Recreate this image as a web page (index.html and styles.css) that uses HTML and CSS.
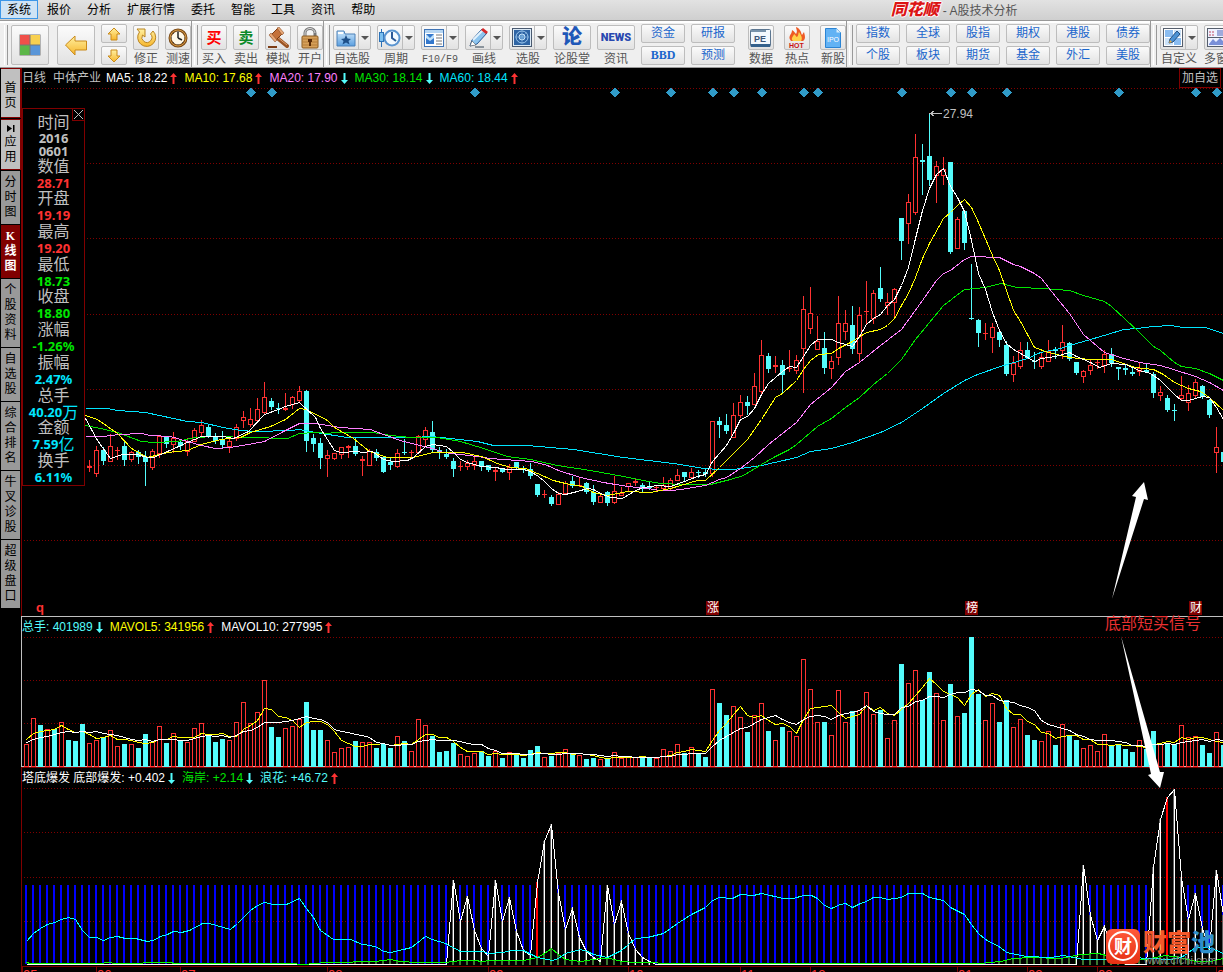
FILE: index.html
```html
<!DOCTYPE html>
<html lang="zh-CN">
<head>
    <meta charset="UTF-8">
    <meta name="viewport" content="width=device-width, initial-scale=1.0">
    <title>同花顺 - A股技术分析</title>
    <link rel="stylesheet" href="styles.css">
</head>
<body>
    <svg class="defs" aria-hidden="true">
        <defs>
            <linearGradient id="gold" x1="0" y1="0" x2="0" y2="1">
                <stop offset="0" stop-color="#fff0a0"/>
                <stop offset="1" stop-color="#f7b62c"/>
            </linearGradient>
            <linearGradient id="sky" x1="0" y1="0" x2="0" y2="1">
                <stop offset="0" stop-color="#cfe8fb"/>
                <stop offset="1" stop-color="#5a9fe0"/>
            </linearGradient>
            <linearGradient id="logo-red" x1="0" y1="0" x2="0" y2="1">
                <stop offset="0" stop-color="#ff5a3c"/>
                <stop offset="1" stop-color="#e63012"/>
            </linearGradient>
            <symbol id="up" viewBox="0 0 7 11">
                <path d="M3.5 0L7 4H4.5V11H2.5V4H0Z" fill="#ff3232"/>
            </symbol>
            <symbol id="down" viewBox="0 0 7 11">
                <path d="M3.5 11L7 7H4.5V0H2.5V7H0Z" fill="#54fcfc"/>
            </symbol>
        </defs>
    </svg>

    <header class="menubar">
        <nav class="menu">
            <button class="active">系统</button>
            <button>报价</button>
            <button>分析</button>
            <button>扩展行情</button>
            <button>委托</button>
            <button>智能</button>
            <button>工具</button>
            <button>资讯</button>
            <button>帮助</button>
        </nav>
        <div class="title"><strong>同花顺</strong><span>- A股技术分析</span></div>
    </header>

    <div class="toolbar">
        <div class="group">
            <button class="face big wide-gap" aria-label="面板">
                <svg width="22" height="22" viewBox="0 0 22 22"><rect x="0.5" y="0.5" width="21" height="21" fill="#777"/><path d="M1 1h10v10H1z" fill="#f0504a"/><path d="M11 1h10v10H11z" fill="#f8d050"/><path d="M1 11h10v10H1z" fill="#5cb648"/><path d="M11 11h10v10H11z" fill="#5a96d8"/><path d="M11 1v20M1 11h20" stroke="#777"/></svg>
            </button>
            <button class="face big" aria-label="后退">
                <svg width="24" height="22" viewBox="0 0 24 22"><path d="M1.500 11L11 2V7H22.500V16H11V21Z" fill="url(#gold)" stroke="#c98a1a"/></svg>
            </button>
            <div class="pair narrow">
                <button class="face small" aria-label="上一个"><svg width="14" height="14" viewBox="0 0 14 14"><path d="M7 1L13 7H10V13H4V7H1Z" fill="url(#gold)" stroke="#c98a1a"/></svg></button>
                <button class="face small" aria-label="下一个"><svg width="14" height="14" viewBox="0 0 14 14"><path d="M7 13L1 7H4V1H10V7H13Z" fill="url(#gold)" stroke="#c98a1a"/></svg></button>
            </div>
            <button class="tool"><span class="face"><svg width="22" height="22" viewBox="0 0 22 22"><path d="M2 2h8v8L7.500 8A5 5 0 1 0 15.500 7L18 4A9 9 0 1 1 4.500 5Z" fill="url(#gold)" stroke="#b98420"/></svg></span>修正</button>
            <button class="tool"><span class="face"><svg width="20" height="20" viewBox="0 0 20 20"><circle cx="10" cy="10" r="8" fill="#fff8e6" stroke="#7a4a18" stroke-width="3"/><circle cx="10" cy="10" r="8" fill="none" stroke="#d79a40"/><path d="M10 10V4M10 10L14 12" stroke="#222" stroke-width="1.500"/><path d="M10 3v1M10 16v1M3 10h1M16 10h1M5 5l1 1M14 14l1 1M5 15l1-1" stroke="#555"/></svg></span>测速</button>
        </div>

        <div class="group">
            <button class="tool"><span class="face buy">买</span>买入</button>
            <button class="tool"><span class="face sell">卖</span>卖出</button>
            <button class="tool"><span class="face"><svg width="22" height="22" viewBox="0 0 22 22"><path d="M9 10L20 19" stroke="#9a5424" stroke-width="4" stroke-linecap="round"/><path d="M10 10L20 18" stroke="#e0a070" stroke-width="1"/><path d="M3 9L11 1L16 6L8 14Z" fill="#c4713a" stroke="#7c3c14"/><path d="M2 8L4 6L10 13L8 15ZM10 1L12 0L17 6L15 8Z" fill="#e7a878" stroke="#7c3c14" stroke-width="0.500"/><path d="M1 20h9" stroke="#7c3c14" stroke-width="2"/></svg></span>模拟</button>
            <button class="tool"><span class="face"><svg width="20" height="22" viewBox="0 0 20 22"><path d="M5 10V6a5 4.500 0 0 1 10 0V10" fill="none" stroke="#777" stroke-width="3"/><path d="M5 9V6a5 4.500 0 0 1 10 0" fill="none" stroke="#ddd"/><rect x="2" y="9" width="16" height="12" rx="1" fill="#d6a05a" stroke="#8a5a20"/><path d="M3 12h14M3 15h14M3 18h14" stroke="#b57c38"/><path d="M8 12h4v3h-1v4H9v-4H8z" fill="#5a2c08"/></svg></span>开户</button>
        </div>

        <div class="group">
            <button class="tool"><span class="face split"><span class="main"><svg width="20" height="20" viewBox="0 0 20 20"><path d="M1 3h7l1 3h10v12H1z" fill="url(#sky)" stroke="#4a80b8"/><path d="M2 4h5v2H2z" fill="#fff"/><path d="M10 7l1.500 3.500L15 11l-2.500 2 1 3.500L10 14.500l-3.500 2 1-3.500L5 11l3.500-.5z" fill="#1e4f88"/></svg></span><i class="caret"></i></span>自选股</button>
            <button class="tool"><span class="face split"><span class="main"><svg width="22" height="20" viewBox="0 0 22 20"><path d="M2.500 1v18" stroke="#2b72b8"/><rect x="0.500" y="4.500" width="4" height="9" fill="#7cc0f0" stroke="#2b72b8"/><circle cx="13" cy="10" r="7.500" fill="#f4faff" stroke="#5a94d0" stroke-width="2"/><path d="M13 4v6l4 3" fill="none" stroke="#2c5a98" stroke-width="2"/></svg></span><i class="caret"></i></span>周期</button>
            <button class="tool"><span class="face split"><span class="main"><svg width="20" height="18" viewBox="0 0 20 18"><rect x="0.500" y="0.500" width="19" height="17" fill="#fff" stroke="#3f73b4"/><path d="M1 1h18v3H1z" fill="#b5d5f2"/><rect x="2" y="5" width="8" height="10" fill="#3478cc"/><path d="M2 5l4 4 4-4v4l-4 3-4-3z" fill="#bde0fa"/><path d="M12 6h6M12 9h6M12 12h6M12 15h6" stroke="#777"/></svg></span><i class="caret"></i></span><small>F10/F9</small></button>
            <button class="tool"><span class="face split"><span class="main"><svg width="20" height="20" viewBox="0 0 20 20"><path d="M2 18l2-6L14 1l5 4L9 16z" fill="#8cc4ee" stroke="#2a5c98"/><path d="M5 12L15 2" stroke="#e2f2fd" stroke-width="2"/><path d="M13 2l2-2 5 4-2 2z" fill="#d82828"/><path d="M2 18l2-5 4 4z" fill="#fff" stroke="#444" stroke-width="0.500"/><path d="M7 19h9" stroke="#345"/></svg></span><i class="caret"></i></span>画线</button>
            <button class="tool"><span class="face split"><span class="main"><svg width="20" height="19" viewBox="0 0 20 19"><rect x="0.500" y="0.500" width="19" height="18" fill="#dceaf6" stroke="#4a5a70"/><rect x="2" y="2" width="16" height="15" fill="#2e64a4"/><circle cx="10" cy="9" r="6" fill="none" stroke="#9dc8ee"/><circle cx="10" cy="9" r="3" fill="#5a94cc" stroke="#c8e4fa"/><path d="M10 2v14M3 9h14M10 9l5-5" stroke="#8cb8e0" stroke-width="0.500"/></svg></span><i class="caret"></i></span>选股</button>
            <button class="tool"><span class="face medium forum">论</span>论股堂</button>
            <button class="tool"><span class="face medium news">NEWS</span>资讯</button>
            <div class="pair"><button class="face small">资金</button><button class="face small bbd">BBD</button></div>
            <div class="pair"><button class="face small">研报</button><button class="face small">预测</button></div>
            <div class="group-inner">
                <button class="tool"><span class="face"><svg width="22" height="20" viewBox="0 0 22 20"><rect x="0.500" y="1.500" width="20" height="17" rx="1" fill="#f3f8fd" stroke="#5c7690"/><path d="M1 16h19v3H1z" fill="#34618c"/><path d="M1 2h15v2H1z" fill="#7892aa"/><text x="4" y="14" font-size="9" font-weight="bold" fill="#3c5678">PE</text></svg></span>数据</button>
                <button class="tool"><span class="face"><svg width="20" height="22" viewBox="0 0 20 22"><path d="M4 14C0 9 5 8 5 3C8 5 8 6 9 7C11 4 9 2 9 0C14 2 14 6 15 8L17 5C18 9 19 12 16 14Z" fill="#ee5a24"/><path d="M6 14C3 11 7 9 7 7C9 8 9 10 10 10C12 8 11 6 12 5C14 8 16 11 14 14Z" fill="#ffd04a"/><text x="2" y="21" font-size="7" font-weight="bold" fill="#c81414">HOT</text></svg></span>热点</button>
                <button class="tool"><span class="face"><svg width="16" height="20" viewBox="0 0 16 20"><path d="M0.500 0.500h11l4 4v15H0.500z" fill="#62b2f4" stroke="#2b84d4"/><path d="M11.500 0.500v4h4z" fill="#d8eefe"/><text x="2" y="14" font-size="7" fill="#fff">IPO</text></svg></span>新股</button>
            </div>
        </div>

        <div class="group">
            <div class="pair"><button class="face small">指数</button><button class="face small">个股</button></div>
            <div class="pair"><button class="face small">全球</button><button class="face small">板块</button></div>
            <div class="pair"><button class="face small">股指</button><button class="face small">期货</button></div>
            <div class="pair"><button class="face small">期权</button><button class="face small">基金</button></div>
            <div class="pair"><button class="face small">港股</button><button class="face small">外汇</button></div>
            <div class="pair"><button class="face small">债券</button><button class="face small">美股</button></div>
        </div>

        <div class="group">
            <button class="tool"><span class="face split"><span class="main"><svg width="20" height="19" viewBox="0 0 20 19"><rect x="0.500" y="0.500" width="19" height="18" fill="#fff" stroke="#555e6c"/><path d="M2 2h8v7H2zM11 10h7v7h-7z" fill="#8abcf0"/><path d="M11 2h7v7h-7zM2 10h8v7H2z" fill="#cbe2f8"/><path d="M6 15l1-4 7-8 3 3-7 8z" fill="#4c92d4" stroke="#234e80"/><path d="M6 15l1-3 2 2z" fill="#f0b040"/></svg></span><i class="caret"></i></span>自定义</button>
            <button class="tool start"><span class="face split"><span class="main"><svg width="20" height="19" viewBox="0 0 20 19"><rect x="0.500" y="0.500" width="19" height="18" fill="#eef2ff" stroke="#555e6c"/><path d="M2 4h6M2 7h6" stroke="#c04860" stroke-dasharray="2 1"/><path d="M10 3h8M10 5h8M10 7h8" stroke="#4d62b8"/><path d="M2 16l4-5 3 3 4-4 5 5v2H2z" fill="#7a90d8"/><path d="M1 9.500h18" stroke="#555e6c"/></svg></span><i class="caret"></i></span>多窗</button>
        </div>
    </div>

    <main class="workspace">
        <aside class="tabs">
            <button class="light">首页</button>
            <button class="light"><svg width="8" height="7" viewBox="0 0 8 7"><path d="M0 0L5 3.500L0 7ZM6 0h1.500v7H6z"/></svg>应用</button>
            <button>分时图</button>
            <button class="active">K线图</button>
            <button>个股资料</button>
            <button>自选股</button>
            <button>综合排名</button>
            <button>牛叉诊股</button>
            <button>超级盘口</button>
        </aside>

        <div class="charts">
            <section class="panel price">
                <div class="legend">
                    <span class="grey name">日线</span>
                    <span class="grey stock">中体产业</span>
                    <span class="white">MA5: 18.22<svg><use href="#up"/></svg></span>
                    <span class="yellow">MA10: 17.68<svg><use href="#up"/></svg></span>
                    <span class="pink">MA20: 17.90<svg><use href="#down"/></svg></span>
                    <span class="green">MA30: 18.14<svg><use href="#down"/></svg></span>
                    <span class="cyan">MA60: 18.44<svg><use href="#up"/></svg></span>
                    <button class="add">加自选</button>
                </div>
                <svg id="price-chart" class="plot" viewBox="22 88 1201 528" preserveAspectRatio="xMinYMin"></svg>
            </section>

            <section class="panel volume">
                <div class="legend">
                    <span class="aqua">总手: 401989<svg><use href="#down"/></svg></span>
                    <span class="yellow">MAVOL5: 341956<svg><use href="#up"/></svg></span>
                    <span class="white">MAVOL10: 277995<svg><use href="#up"/></svg></span>
                </div>
                <svg id="volume-chart" class="plot" viewBox="22 637 1201 130" preserveAspectRatio="xMinYMin"></svg>
            </section>

            <section class="panel tower">
                <div class="legend">
                    <span class="white">塔底爆发 底部爆发: +0.402<svg><use href="#down"/></svg></span>
                    <span class="green">海岸: +2.14<svg><use href="#down"/></svg></span>
                    <span class="aqua">浪花: +46.72<svg><use href="#up"/></svg></span>
                </div>
                <svg id="tower-chart" class="plot" viewBox="22 788 1201 184" preserveAspectRatio="xMinYMin"></svg>
            </section>

            <svg class="notes" viewBox="21 68 1202 904" preserveAspectRatio="xMinYMin">
                <path d="M1112 599L1136 497L1132 496L1144 482L1148 500L1144 499Z" fill="#fff"/>
                <path d="M1121 636L1160 772L1164 772L1160 788L1148 775L1151 774Z" fill="#fff"/>
                <text x="1105" y="629" font-size="16" fill="#e83030">底部短买信号</text>
                <rect x="1106" y="929" width="34" height="35" rx="6" fill="url(#logo-red)"/>
                <circle cx="1123" cy="946" r="14" fill="none" stroke="#fff" stroke-width="2"/>
                <text x="1114" y="953" font-size="18" font-weight="bold" fill="#fff">财</text>
                <text class="brand" x="1143" y="951" font-size="24"><tspan fill="#f4592a">财富</tspan><tspan fill="#2f8fcb">池</tspan></text>
                <text x="1144" y="964" font-size="11" fill="#8b8b8b">www.cfchi.com</text>
            </svg>

            <div class="quote">
                <button class="close" aria-label="关闭"><svg width="9" height="9" viewBox="0 0 9 9"><path d="M0 0L9 9M9 0L0 9" stroke="#c0c0c0"/></svg></button>
                <dl>
                    <div><dt>时间</dt><dd class="grey date">2016<br>0601</dd></div>
                    <div><dt>数值</dt><dd class="red">28.71</dd></div>
                    <div><dt>开盘</dt><dd class="red">19.19</dd></div>
                    <div><dt>最高</dt><dd class="red">19.20</dd></div>
                    <div><dt>最低</dt><dd class="lime">18.73</dd></div>
                    <div><dt>收盘</dt><dd class="lime">18.80</dd></div>
                    <div><dt>涨幅</dt><dd class="lime">-1.26%</dd></div>
                    <div><dt>振幅</dt><dd class="cyan">2.47%</dd></div>
                    <div><dt>总手</dt><dd class="cyan">40.20<span>万</span></dd></div>
                    <div><dt>金额</dt><dd class="cyan">7.59<span>亿</span></dd></div>
                    <div><dt>换手</dt><dd class="cyan">6.11%</dd></div>
                </dl>
            </div>
        </div>
    </main>

    <script src="chart.js"></script>
</body>
</html>
```
FILE: styles.css
```css
* {
    box-sizing: border-box;
}

body {
    margin: 0;
    min-height: 100vh;
    display: flex;
    flex-direction: column;
    overflow-x: hidden;
    background: #000;
    font-family: "Liberation Sans", "Noto Sans CJK SC", sans-serif;
    font-size: 12px;
}

button {
    margin: 0;
    padding: 0;
    border: none;
    background: none;
    font: inherit;
    color: inherit;
    cursor: pointer;
}

.defs {
    position: absolute;
    width: 0;
    height: 0;
}

/* menu */
.menubar {
    display: flex;
    height: 20px;
    background: linear-gradient(#e2e2e2, #cfcfcf);
    color: #000;
}

.menubar::after {
    content: "";
    flex: 3;
}

.menu {
    display: flex;
    flex: 13;
    gap: 2px;
}

.menu button {
    height: 19px;
    padding: 0 6px;
    border: 1px solid transparent;
    line-height: 18px;
    white-space: nowrap;
}

.menu button.active {
    border-color: #3c96e8;
    background: #cfe3f5;
}

.title {
    display: flex;
    gap: 4px;
    line-height: 22px;
    color: #555;
    white-space: nowrap;
}

.title strong {
    font-size: 16px;
    font-style: italic;
    font-weight: 900;
    line-height: 19px;
    color: #dc1414;
    text-shadow: 1px 0 #fff, -1px 0 #fff, 0 1px #fff, 0 -1px #fff;
}

/* toolbar */
.toolbar {
    display: flex;
    height: 48px;
    overflow: hidden;
    border-top: 1px solid #999;
    border-bottom: 1px solid #999;
    background: #efefef;
    box-shadow: inset 0 2px #fff;
    color: #555;
}

.group {
    display: flex;
    flex: none;
    gap: 6px;
    align-items: flex-start;
    padding: 4px 0 0 2px;
    border-right: 1px solid #999;
}

.group::before {
    content: "";
    width: 2px;
    height: 40px;
    margin-right: -3px;
    border-right: 1px solid #999;
    border-left: 1px solid #fff;
}

.group:first-child {
    padding-left: 4px;
}

.group:last-child {
    border-right: none;
}

.group-inner {
    display: flex;
    gap: 10px;
    margin-left: 7px;
}

.face {
    display: flex;
    align-items: center;
    justify-content: center;
    width: 26px;
    height: 25px;
    border: 1px solid #bdbdbd;
    border-radius: 2px;
    background: linear-gradient(#fbfbfb, #e2e2e2);
}

.face.big {
    width: 38px;
    height: 40px;
}

.face.wide-gap {
    margin-right: 2px;
}

.face.small {
    width: 100%;
    height: 19px;
    line-height: 17px;
    color: #1a66cc;
}

.face.medium,
.face.split {
    width: 38px;
}

.face .main {
    display: flex;
    align-items: center;
    justify-content: center;
    width: 25px;
    height: 100%;
    border-right: 1px solid #bdbdbd;
}

.caret {
    margin: auto;
    border: 4px solid transparent;
    border-top-color: #555;
    border-bottom: none;
}

.tool {
    display: flex;
    flex-direction: column;
    flex: none;
    align-items: center;
    line-height: 19px;
    white-space: nowrap;
}

.tool.start {
    align-items: flex-start;
}

.tool small {
    font: 10px/19px "Liberation Mono", monospace;
}

.pair {
    display: flex;
    flex-direction: column;
    gap: 3px;
    width: 44px;
    margin-top: -1px;
}

.pair.narrow {
    width: 26px;
}

.buy,
.sell {
    font-size: 15px;
    font-weight: bold;
    color: #f00;
}

.sell {
    color: #0a8a28;
}

.forum {
    font-size: 20px;
    font-weight: 900;
    color: #1f58b8;
}

.news {
    font-family: Roboto, sans-serif;
    font-size: 11px;
    font-weight: 900;
    color: #2848b0;
}

.bbd {
    font-family: "Liberation Serif", serif;
    font-weight: bold;
}

/* left tabs */
.workspace {
    display: flex;
    flex: 1;
}

.tabs {
    width: 21px;
    flex: none;
    padding-left: 1px;
}

.tabs button {
    display: block;
    width: 19px;
    margin-bottom: 1px;
    padding: 4px 3px;
    background: #999;
    color: #000;
    line-height: 15px;
    word-break: break-all;
    white-space: normal;
}

.tabs button.light {
    width: 20px;
    padding: 12px 3px 6px;
    border: 1px solid #800000;
    border-left: none;
    background: #c0c0c0;
}

.tabs button.light + .light {
    padding: 5px 3px 4px;
}

.tabs svg {
    display: block;
    margin: 0 auto 3px;
}

.tabs button.active {
    background: #800000;
    color: #fff;
    font-family: "Liberation Serif", "Noto Sans CJK SC", serif;
    font-weight: bold;
}

/* charts */
.charts {
    position: relative;
    display: grid;
    grid-template-rows: 548fr 151fr 205fr;
    flex: 1;
    min-width: 0;
}

.panel {
    display: flex;
    flex-direction: column;
    min-height: 0;
    border-left: 1px solid #800000;
}

.panel.volume {
    border-top: 1px solid #c0c0c0;
    border-left-color: #c0c0c0;
}

.panel.tower {
    border-top: 1px solid #800000;
}

.legend {
    display: flex;
    flex: none;
    gap: 7px;
    height: 20px;
    line-height: 20px;
    white-space: nowrap;
}

.legend svg {
    width: 7px;
    height: 11px;
    margin-left: 3px;
    vertical-align: -2px;
}

.legend .stock {
    margin-right: -2px;
}

.add {
    margin: 0 2px 0 auto;
    padding: 0 2px;
    border: 1px solid #800000;
    line-height: 18px;
    color: #c0c0c0;
}

.plot {
    flex: 1;
    width: 100%;
    min-height: 0;
}

.notes {
    position: absolute;
    top: 0;
    left: 0;
    width: 100%;
    height: 100%;
    pointer-events: none;
}

.brand {
    font-weight: 900;
}

.grey { color: #c0c0c0; }
.white { color: #fff; }
.yellow { color: #ff0; }
.pink { color: #ff80ff; }
.green { color: #00e600; }
.lime { color: #00e600; }
.cyan { color: #00e6ff; }
.aqua { color: #54fcfc; }
.red { color: #ff3232; }

/* floating quote window */
.quote {
    position: absolute;
    top: 40px;
    left: 1px;
    width: 63px;
    height: 378px;
    padding-top: 6px;
    border: 1px solid #800000;
    background: #000;
    text-align: center;
}

.quote .close {
    position: absolute;
    top: -1px;
    right: -1px;
    width: 13px;
    height: 13px;
    border: 1px solid #800000;
    line-height: 0;
}

.quote dl {
    display: flex;
    flex-direction: column;
    justify-content: space-between;
    height: 100%;
    margin: 0;
}

.quote dt {
    font-size: 16px;
    line-height: 16px;
    color: #c0c0c0;
}

.quote dd {
    margin: 0;
    font: bold 13px/16px "Noto Sans", "Noto Sans CJK SC", sans-serif;
    white-space: nowrap;
}

.quote dd.date {
    padding-top: 1px;
    line-height: 13px;
}

.quote dd span {
    font-size: 16px;
    font-weight: normal;
    line-height: 16px;
    vertical-align: -1px;
}
```
FILE: chart.js
```js
const STEP = 7;
const FIRST = 26;
const RED = '#ff3232';
const CYAN = '#54fcfc';
const x = i => FIRST + i * STEP;

// colour high top bottom low, starting at bar 9
const candles = `r 460 466 467 471|r 446 450 473 476|c 447 450 461 464|r 434 446 461 461|r 447 450 450 459|c 442 446 460 465
r 451 452 459 461|c 450 452 457 463|c 451 457 462 485|r 449 451 467 469|r 436 436 453 457|c 437 437 444 447|r 432 438 444 452
c 441 442 446 449|r 438 441 451 455|r 428 430 441 441|r 420 425 432 437|c 425 427 437 437|c 433 436 441 443|c 431 440 445 447
r 438 441 446 452|r 424 427 438 440|r 411 417 420 427|r 408 419 424 426|r 398 409 420 421|r 382 397 412 413|c 398 401 407 409
c 403 408 409 413|r 393 408 409 410|r 396 397 404 408|r 386 391 400 402|c 390 391 441 451|c 434 438 444 451|c 438 443 458 468
r 450 455 458 476|r 453 453 458 459|r 447 447 454 458|r 445 446 447 457|c 438 446 454 455|r 456 459 460 475|r 449 451 465 465
c 449 452 458 460|c 456 457 472 472|c 457 462 465 469|r 449 453 466 467|c 439 452 453 454|r 450 452 452 458|r 435 436 452 453
r 427 430 439 446|c 421 432 450 452|c 447 450 453 458|c 449 454 457 458|c 458 461 469 476|r 461 466 466 470|r 460 463 466 469
r 456 461 465 469|c 461 461 467 470|c 465 465 470 471|r 467 470 471 480|c 469 469 472 472|r 464 467 472 479|c 462 462 468 469
c 466 469 470 472|c 463 469 476 478|c 484 484 495 496|r 490 494 494 497|c 495 497 504 505|r 492 494 504 504|r 481 483 493 494
c 476 481 486 487|r 478 485 485 486|c 482 483 492 493|c 485 492 502 504|r 495 496 502 502|c 491 492 503 505|r 476 491 502 503
r 487 493 495 495|r 483 483 486 491|r 478 481 482 485|c 483 485 488 491|c 482 486 488 489|r 485 487 487 490|r 477 485 488 489
r 478 480 488 490|r 469 475 480 480|c 472 472 477 481|r 468 472 477 478|c 470 472 473 477|c 468 472 474 476|r 421 421 473 476
c 417 421 425 437|c 414 425 431 433|r 403 415 437 437|r 395 402 415 417|c 396 402 406 414|r 373 386 404 404|r 340 355 391 393
c 353 356 369 372|r 356 365 366 372|c 360 365 375 393|r 350 368 368 371|r 355 360 370 373|r 296 309 348 392|r 287 313 328 333
r 316 341 349 349|c 332 348 368 373|r 356 361 368 378|r 296 323 357 364|r 310 323 331 339|c 306 325 349 353|r 307 315 353 361
r 281 311 311 323|r 290 293 318 323|c 267 288 299 301|r 293 302 305 314|r 288 289 302 318|c 218 218 241 259|r 194 202 223 243
r 134 157 212 214|c 144 160 162 194|c 113 156 180 185|r 161 166 175 202|r 157 169 175 184|c 162 162 252 253|r 217 219 248 248
c 210 211 243 249|c 264 318 319 319|c 319 320 333 346|r 323 333 333 339|r 323 327 337 352|c 331 332 340 346|c 341 345 374 375
r 356 363 374 381|r 342 350 366 368|c 342 350 358 358|c 352 361 362 368|r 353 357 366 368|r 340 351 361 361|c 347 350 351 358
r 325 342 350 358|c 342 343 359 360|c 362 362 373 374|r 370 371 376 382|r 359 365 370 374|r 359 362 362 368|r 350 354 365 372
c 348 354 363 366|c 367 367 369 379|c 364 368 370 374|c 368 372 374 375|r 362 368 371 375|c 363 370 372 372|c 372 374 393 397
r 386 392 395 400|c 395 398 410 411|c 404 410 411 420|r 376 395 398 399|r 385 393 402 410|r 379 382 395 397|c 385 386 397 398
c 399 400 415 417|r 427 447 452 472|c 452 452 462 462`.split(/[|\n]/).map(row => {
    const [color, ...v] = row.split(' ');
    return [color, ...v.map(Number)];
});

const volumes = [744, 718, 725, 729, 729, 722, 740, 741, 724, 743, 740, 737, 730, 746, 744, 744, 748, 734, 742, 726,
    743, 733, 741, 742, 728, 723, 735, 742, 739, 740, 722, 702, 723, 712, 680, 727, 737, 728, 726, 719,
    702, 730, 730, 740, 752, 748, 747, 741, 742, 742, 748, 744, 748, 736, 741, 751, 719, 725, 736, 752,
    751, 743, 754, 756, 753, 751, 756, 751, 758, 752, 754, 758, 750, 746, 757, 756, 753, 749, 753, 755,
    759, 758, 759, 759, 752, 758, 757, 757, 757, 758, 758, 749, 751, 744, 753, 747, 753, 757, 689, 703,
    715, 706, 717, 732, 715, 703, 731, 740, 727, 731, 736, 659, 689, 722, 722, 735, 690, 722, 711, 710,
    692, 714, 710, 738, 720, 664, 683, 670, 700, 672, 693, 720, 684, 716, 713, 637, 694, 720, 703, 722,
    700, 727, 719, 735, 740, 741, 731, 745, 724, 736, 740, 748, 745, 751, 734, 746, 745, 749, 752, 740,
    749, 731, 744, 743, 744, 725, 737, 736, 745, 753, 732, 745];
const volumesBefore = [745, 745, 745, 745, 745, 747, 734, 734, 734];
const colors = 'rrcrcrccc'.split('').concat(candles.map(c => c[0]));

const ma = {
    '#00e6ff': '85,408 107,408 117,410 145,412 187,421 201,422 223,427 240,430 255,431 290,430 299,429 315,432 347,437 413,437 430,436 450,438 477,441 493,445 527,445 573,449 623,457 673,463 697,467 703,468 720,469 733,469 761,465 796,457 810,451 831,448 852,442 880,432 901,422 922,408 943,393 964,380 977,374 1000,366 1027,358 1040,352 1060,348 1069,345 1090,339 1107,334 1123,329 1137,328 1153,326 1170,325 1183,327 1205,327 1223,333',
    '#00e600': '85,425 100,428 117,432 141,441 153,442 176,441 195,437 215,436 250,437 287,438 299,433 315,432 327,433 334,432 372,432 390,435 410,437 437,437 460,441 483,448 507,456 530,459 557,465 590,470 623,476 643,480 660,483 683,484 710,484 730,479 743,475 761,464 775,456 789,449 796,444 817,426 831,418 845,407 859,397 873,384 887,373 901,359 915,339 929,322 943,305 964,289 985,287 1000,283 1017,287 1043,288 1069,290 1083,295 1104,301 1111,306 1125,319 1139,332 1153,346 1160,350 1174,362 1181,366 1195,368 1209,373 1223,380',
    '#ff80ff': '85,436 102,436 119,434 141,433 150,435 170,436 187,441 201,445 215,448 230,447 248,444 264,441 285,430 299,423 315,423 327,425 340,427 370,429 383,434 403,441 432,448 443,452 460,454 477,456 490,458 517,460 532,461 547,465 558,470 580,477 603,482 627,486 647,488 660,490 672,490 687,488 705,485 719,479 726,477 740,468 754,457 768,444 782,433 796,422 810,404 831,387 845,371 859,362 880,345 901,329 922,300 936,280 943,273 950,270 964,259 971,256 999,257 1013,264 1020,266 1034,273 1041,278 1055,296 1069,313 1083,334 1104,352 1120,357 1139,362 1160,365 1173,369 1195,376 1209,382 1223,390',
    '#ffff00': '85,415 97,419 117,433 131,448 147,457 167,452 187,450 201,444 220,439 240,437 250,432 270,426 285,419 299,408 306,409 327,420 334,427 353,438 369,451 387,457 413,457 432,452 462,452 481,456 497,463 510,467 525,468 537,473 553,480 565,483 582,486 593,492 607,495 627,491 650,492 670,488 697,480 705,480 719,467 733,453 747,439 761,419 775,397 782,393 796,380 803,369 810,360 818,354 831,353 838,348 852,341 866,332 880,329 887,325 894,318 901,305 908,293 915,277 922,258 929,243 943,218 950,212 957,205 964,199 971,207 978,222 992,255 999,270 1013,310 1020,321 1027,334 1034,347 1048,352 1069,357 1090,359 1111,359 1135,367 1153,369 1163,374 1174,382 1188,388 1200,391 1209,397 1223,410',
    '#ffffff': '85,418 97,440 110,458 122,454 137,454 147,457 153,457 167,451 187,442 201,436 223,436 233,438 248,431 264,414 278,409 285,406 299,402 315,417 320,428 334,450 340,452 357,451 362,452 372,451 376,454 383,459 393,461 407,460 413,457 425,446 432,444 446,446 453,452 460,459 467,462 481,466 495,467 507,469 523,469 530,471 538,476 544,481 551,488 558,493 565,494 577,491 587,488 593,489 600,493 610,497 622,498 635,490 643,487 657,485 670,486 684,481 697,476 705,474 712,461 719,453 726,445 733,433 740,419 747,416 754,408 761,394 768,383 782,371 789,366 796,367 803,356 810,345 817,339 831,339 838,342 852,346 859,336 866,324 873,318 880,314 887,305 894,299 901,285 908,267 915,238 922,210 929,188 936,174 943,168 950,186 957,197 964,211 971,240 978,273 985,289 992,312 999,330 1006,343 1013,349 1020,353 1027,357 1034,361 1041,358 1055,356 1062,354 1069,352 1076,356 1090,362 1099,367 1111,363 1125,364 1139,370 1150,373 1160,380 1174,394 1181,400 1188,400 1202,396 1209,397 1216,407 1223,419'
};

const wave = '26,941 33,933 40,928 47,924 54,922 61,919 68,917 75,919 82,930 89,937 96,937 103,940 110,937 117,936 125,938 135,938 147,941 153,940 160,936 167,934 173,931 181,932 189,930 202,923 209,923 230,929 237,923 250,910 257,905 264,902 273,904 286,904 299,898 306,908 313,917 320,930 333,939 350,939 362,944 370,945 377,947 383,951 390,952 403,949 411,947 425,936 432,939 445,943 460,951 482,951 488,953 503,952 510,950 523,950 537,957 552,960 558,958 565,953 580,949 587,951 593,954 607,957 621,950 635,938 647,937 663,933 677,923 691,914 705,907 712,900 719,897 732,898 740,894 753,895 761,893 783,898 793,898 803,895 811,895 817,898 824,905 831,908 840,904 845,903 852,907 860,903 866,901 873,897 880,897 887,899 901,897 908,893 922,893 929,897 943,900 950,907 964,914 971,924 978,933 985,939 1000,947 1006,952 1026,956 1050,957 1063,955 1083,959 1103,959 1130,957 1170,959 1181,957 1195,947 1206,947 1216,950 1223,953';
const shore = '26,962 30,963 100,963 107,962 115,963 170,962 174,963 290,963 303,964 325,962 345,962 360,961 375,961 390,959 400,961 417,962 445,962 460,960 475,960 481,961 490,960 523,960 537,957 544,953 551,948 558,954 565,959 580,961 600,958 610,958 621,961 635,962 655,962 660,963 980,963 1000,961 1013,958 1030,957 1060,958 1080,954 1098,953 1110,956 1145,959 1165,955 1180,957 1195,961 1210,961 1223,958';
const burst = {
    61: 880, 62: 921, 63: 896, 64: 930, 65: 948, 66: 956, 67: 880, 68: 921, 69: 897, 70: 931, 71: 950, 72: 955,
    73: 882, 74: 841, 75: 824, 76: 893, 77: 929, 78: 908, 79: 937, 80: 951, 81: 957, 82: 961, 83: 885, 84: 924,
    85: 901, 86: 933, 87: 949, 88: 957, 89: 961,
    151: 865, 152: 915, 153: 940, 154: 926, 155: 948, 156: 957, 161: 867, 162: 819, 163: 797, 164: 789, 165: 877,
    166: 919, 167: 893, 168: 928, 169: 948, 170: 870, 171: 915
};
const signals = [73, 163];

function rect(left, top, width, height, fill) {
    return `<rect x="${left}" y="${top}" width="${width}" height="${height}" fill="${fill}"/>`;
}

function box(left, top, width, height) {
    return `<rect x="${left + 0.5}" y="${top + 0.5}" width="${width - 1}" height="${height - 1}" fill="#000" stroke="${RED}"/>`;
}

function line(points, color) {
    return `<polyline points="${points}" fill="none" stroke="${color}" transform="translate(0.5 0.5)"/>`;
}

function grid(rows) {
    return rows.map(y => `<path d="M24 ${y + 0.5}H1223" stroke="#800000" stroke-dasharray="1 2"/>`).join('');
}

function draw(id, content) {
    document.getElementById(id).innerHTML = `<g shape-rendering="crispEdges">${content}</g>`;
}

function average(n) {
    const all = volumesBefore.concat(volumes);
    return volumes.map((v, i) => {
        const part = all.slice(i + 10 - n, i + 10);
        return `${x(i)},${Math.round(part.reduce((a, b) => a + b) / n)}`;
    }).join(' ');
}

function heightAt(points, px) {
    const list = points.split(' ').map(p => p.split(',').map(Number));
    const k = Math.max(1, list.findIndex(p => p[0] >= px));
    const [a, b] = [list[k - 1], list[k]];
    return Math.round(a[1] + (b[1] - a[1]) * (px - a[0]) / (b[0] - a[0]));
}

function drawPrice() {
    let out = grid([88, 163, 238, 314, 389, 465, 540]);
    candles.forEach(([color, high, top, bottom, low], k) => {
        const cx = x(k + 9);
        const fill = color === 'r' ? RED : CYAN;
        out += rect(cx, high, 1, low - high + 1, fill);
        if (color === 'r' && bottom - top > 1) {
            out += box(cx - 2, top, 5, bottom - top + 1);
        } else {
            out += rect(cx - 2, top, 5, Math.max(1, color === 'r' ? bottom - top + 1 : bottom - top), fill);
        }
    });
    for (const color in ma) {
        out += line(ma[color], color);
    }
    [251, 272, 475, 615, 671, 713, 734, 762, 804, 818, 902, 951, 972, 1007, 1119, 1196, 1217].forEach(cx => {
        out += `<path d="M${cx} 88L${cx + 5} 92.500L${cx} 97L${cx - 5} 92.500Z" fill="#309bc8"/>`;
    });
    [['涨', 706], ['榜', 965], ['财', 1189]].forEach(([label, left]) => {
        out += rect(left, 601, 13, 14, '#800000');
        out += `<text x="${left + 1}" y="612" font-size="12" fill="#fff">${label}</text>`;
    });
    out += '<path d="M930 113.500H942M934 111L930 113.500L934 116" fill="none" stroke="#c0c0c0"/>';
    out += '<text x="943" y="118" font-size="12" fill="#c0c0c0">27.94</text>';
    out += `<text x="36" y="612" font-size="13" font-weight="bold" fill="${RED}">q</text>`;
    draw('price-chart', out);
}

function drawVolume() {
    let out = grid([637, 680, 723]) + rect(22, 766, 1201, 1, '#c0c0c0');
    volumes.forEach((top, i) => {
        out += colors[i] === 'r' ? box(x(i) - 2, top, 5, 767 - top) : rect(x(i) - 2, top, 5, 767 - top, CYAN);
    });
    out += line(average(5), '#ffff00') + line(average(10), '#ffffff');
    draw('volume-chart', out);
}

function drawTower() {
    let out = grid([788, 832, 877, 921]);
    const points = [];
    for (let i = 0; i <= 171; i++) {
        const top = burst[i] || 965;
        const green = heightAt(shore, x(i));
        out += rect(x(i) - 1, 885, 2, Math.max(0, Math.min(top, 964) - 885), '#0000ff');
        if (signals.includes(i)) {
            out += rect(x(i) - 1, top, 2, 965 - top, '#ff0000');
        } else if (burst[i]) {
            out += rect(x(i) - 1, top, 1, 965 - top, '#606060') + rect(x(i), top, 1, 965 - top, '#fff');
        }
        if (green < 962) {
            out += rect(x(i) - 1, green, 2, 965 - green, '#3c7832');
        }
        points.push(`${x(i)},${burst[i] ? top : 964}`);
    }
    out += line(points.join(' '), '#ffffff') + line(shore, '#00ff00') + line(wave, '#00ffff');
    out += rect(22, 966, 1201, 1, '#800000');
    [22, 96, 180, 327, 488, 628, 740, 810, 957, 1027, 1097, 1216].forEach((left, i) => {
        const month = String((i + 4) % 12 + 1).padStart(2, '0');
        out += rect(left, 966, 1, 6, '#800000');
        out += `<text x="${left + 1}" y="979" font-size="13" fill="${RED}">${month}</text>`;
    });
    draw('tower-chart', out);
}

drawPrice();
drawVolume();
drawTower();
```
